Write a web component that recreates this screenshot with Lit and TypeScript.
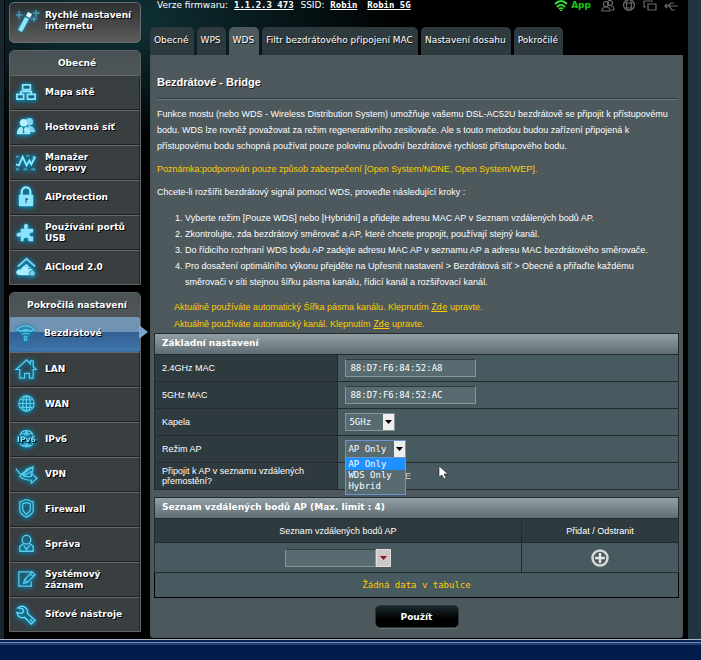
import { LitElement, html, css, svg } from "lit";
import { customElement, property, state } from "lit/decorators.js";
import { classMap } from "lit/directives/class-map.js";

const icons: Record<string, unknown> = {
  wand: svg`<g fill="none" stroke-width="1"><path d="M3 2v8M0 6h7M20 1v7M17 4h7M18 8v5M15 10h6" stroke="#4fb4d6"/></g><path d="M12 3l4 2-2 4-4-2z" fill="#e8fbff"/><path d="M9 8l4 2-7 13-4-2z" fill="#8fe4fa"/>`,
  map: svg`<path d="M8 4h8v5H8zM2 14h7v5H2zM13 14h8v5h-8zM12 9v3M6 13v-2h11v2" fill="#1e6780" stroke="#8fe6fb" stroke-width="1.800"/>`,
  guests: svg`<circle cx="15" cy="6" r="4" fill="#7fd6ee"/><path d="M13 11c5-2 8 2 8 6h-6z" fill="#7fd6ee"/><circle cx="9" cy="7" r="4" fill="#b5f1ff"/><path d="M2 19c0-5 2-7 5-8l2 3 2-3c3 1 5 3 5 8z" fill="#a3ebfd"/><path d="M9 12l-1 6h2z" fill="#2a7690"/>`,
  traffic: svg`<path d="M1 6h3M12 5h3M18 6h3M1 19h3M9 19h4M17 19h4" stroke="#3ca0c0" stroke-width="2"/><path d="M1 14l3 1 4-9 4 9 3-5 2 4 4-8" fill="none" stroke="#8be7fd" stroke-width="2"/>`,
  lock: svg`<path d="M7 10V6c0-6 9-6 9 0v4" fill="none" stroke="#8ee5fb" stroke-width="2.4"/><rect x="4" y="9" width="15" height="12" rx="1" fill="#8ce5fb"/><path d="M11 12l3 2-2 1v3h-1z" fill="#175a75"/>`,
  puzzle: svg`<path d="M6 8h4C7 1 16 1 13 8h6v4c-5-1-5 5 0 4v5h-5c1-5-6-5-5 0H6v-5c-6 2-6-5 0-4z" fill="#8ae3fa"/>`,
  cloud: svg`<path d="M3 11l9-8 9 8" fill="none" stroke="#75d3ee" stroke-width="2"/><path d="M7 12l5-4 5 5" fill="#80dcf4"/><path d="M5 20c-6 0-4-7 1-6 2-5 8-3 8 0 4-2 7 1 5 6z" fill="#a5effe"/><circle cx="18" cy="18" r="3" fill="#75d4ed" stroke="#267590" stroke-width=".8"/>`,
  wifi: svg`<g fill="none" stroke="#62cdf2" stroke-width="1.1"><path d="M2 8c5-5 13-5 18 0-2 2-16 2-18 0zM5 10.500c4-3 8-3 12 0M7 13c3-2 5-2 8 0M9 15.500c1-1 3-1 4 0"/><circle cx="11" cy="18" r="1.500"/></g>`,
  house: svg`<path d="M1 12L12 2l4 4V3h3v6l3 3h-3v9h-4v-5h-5v5H5v-9z" fill="none" stroke="#58cdf0" stroke-width="1.3"/>`,
  globe: svg`<g fill="none" stroke="#61cdeb" stroke-width="1.2"><circle cx="12" cy="11" r="8"/><ellipse cx="12" cy="11" rx="4" ry="8"/><path d="M12 3v16M4 11h16M6 7h12M6 15h12"/></g>`,
  ipv6: svg`<g fill="none" stroke="#61cdeb" stroke-width="1.1"><path d="M5 8c2-7 12-7 14 0M5 16c3 5 11 5 14 0M10 8c1-5 3-5 4 0M10 16c1 4 3 4 4 0M12 3v5M12 16v4M6 6h12M6 18h12"/></g><text x="12" y="15" text-anchor="middle" font-family="DejaVu Sans" font-size="8" fill="#8be8fc">IPv6</text>`,
  vpn: svg`<path d="M1 6l4 5c4 2 5 0 9-4l-3 0 8-3-1 6-2-1c-3 3-5 4-8 4 4 2 6 1 9 1v-3l6 5-6 5v-3c-5 0-9-1-12-4 2-3 7-7 13-9" fill="none" stroke="#5bcdec" stroke-width="1.3"/>`,
  shield: svg`<g fill="none" stroke="#5bcdec" stroke-width="1.3"><path d="M5 4c2 0 4-1 5-2h4c1 1 3 2 5 2v9c0 3-3 5-7 7-4-2-7-4-7-7z"/><path d="M8 6l3-1h2l3 1v6c0 2-2 3-4 5-2-2-4-3-4-5z"/></g>`,
  admin: svg`<g fill="none" stroke="#5bcdec" stroke-width="1.4"><circle cx="12" cy="7" r="4.5"/><path d="M9 11l-4 3v5h14v-5l-4-3M9 13l3 4 3-4"/></g>`,
  log: svg`<g fill="none" stroke="#5bcdec" stroke-width="1.3"><path d="M17 5V4H4v15h13v-5"/><path d="M10 12l8-8 3 3-8 8-4 1zM10 12l3 3M16 6l3 3"/></g>`,
  wrench: svg`<path d="M3 5l5 1 1 3-2 2-5-1c1 4 4 6 8 5l7 7 4-4-8-7c1-6-5-10-10-6zM16 17l2 2" fill="none" stroke="#65d7f4" stroke-width="1.5"/>`,
};

interface MenuItem { icon: string; label: string; active?: boolean; }

const general: MenuItem[] = [
  { icon: "map", label: "Mapa sítě" },
  { icon: "guests", label: "Hostovaná síť" },
  { icon: "traffic", label: "Manažer dopravy" },
  { icon: "lock", label: "AiProtection" },
  { icon: "puzzle", label: "Používání portů USB" },
  { icon: "cloud", label: "AiCloud 2.0" },
];
const advanced: MenuItem[] = [
  { icon: "wifi", label: "Bezdrátové", active: true },
  { icon: "house", label: "LAN" },
  { icon: "globe", label: "WAN" },
  { icon: "ipv6", label: "IPv6" },
  { icon: "vpn", label: "VPN" },
  { icon: "shield", label: "Firewall" },
  { icon: "admin", label: "Správa" },
  { icon: "log", label: "Systémový záznam" },
  { icon: "wrench", label: "Síťové nástroje" },
];
const tabs = ["Obecné", "WPS", "WDS", "Filtr bezdrátového připojení MAC", "Nastavení dosahu", "Pokročilé"];

@customElement("side-menu")
export class SideMenu extends LitElement {
  @property() heading = "";
  @property({ attribute: false }) items: MenuItem[] = [];

  static styles = css`
    :host { display: block; }
    * { box-sizing: border-box; }
    nav { border: 1px solid #5d6465; border-radius: 5px 5px 0 0; }
    h2 {
      margin: 0; height: 24px; padding-left: 4px; text-align: center;
      font: bold 9px/24px "DejaVu Sans", Verdana, sans-serif; color: #fff;
      background: linear-gradient(#495154, #4e5658); border-radius: 4px 4px 0 0;
      text-shadow: 1px 1px 0 #1a1d1e;
    }
    a {
      position: relative; display: flex; align-items: center; gap: 7px; height: 35px; padding: 0 8px 0 5px;
      font: bold 9px/11px "DejaVu Sans", Verdana, sans-serif; color: #fff; text-decoration: none;
      text-shadow: 1px 1px 0 #000; background: #393e40;
      border-top: 1px solid #63696a; border-bottom: 1px solid #1e2223; border-right: 1px solid #222627;
    }
    a:last-child { height: 34px; border-bottom: 0; }
    a.active { padding-bottom: 3px; gap: 6px; background: linear-gradient(#7294b4 0 43%, #335f91 43%, #3f74ac); border-color: #6f91b2 transparent #3a6ba0; }
    a.active::after {
      content: ""; position: absolute; left: 100%; top: 7px;
      border: 7px solid transparent; border-left: 9px solid #7ba3cb; border-right: 0;
    }
    svg { width: 23px; height: 23px; flex: none; overflow: visible; filter: drop-shadow(0 0 2px #0889b5) drop-shadow(0 1px 2px #08789f); }
  `;

  render() {
    return html`<nav aria-label=${this.heading}>
      <h2>${this.heading}</h2>
      ${this.items.map((i) => html`<a href="#" class=${classMap({ active: !!i.active })}>
        <svg viewBox="0 0 24 24" aria-hidden="true">${icons[i.icon]}</svg><span>${i.label}</span></a>`)}
    </nav>`;
  }
}

@customElement("app-root")
export class AppRoot extends LitElement {
  @state() private mode = "AP Only";

  static styles = css`
    :host { display: block; font: 9px/16px "Liberation Sans", Arial, sans-serif; color: #fff; }
    * { box-sizing: border-box; }
    .page { min-height: 100vh; display: flex; flex-direction: column; }
    .window { background: linear-gradient(90deg, #17252e, #213440); padding: 0 13px 0 4px; }
    .content {
      display: flex; gap: 9px; padding: 0 5px 1px;
      background: radial-gradient(ellipse 290px 120px at 110px 20px, #10343a, transparent), #000;
      border-left: 1px solid #000;
    }
    aside { width: 132px; flex: none; display: flex; flex-direction: column; gap: 7px; padding: 2px 0 6px; margin-left: -1px; }
    .quick {
      display: flex; align-items: center; gap: 5px; height: 41px; padding: 0 4px 3px 6px; text-align: left;
      font: bold 9px/11px "DejaVu Sans", Verdana, sans-serif; color: #fff; text-shadow: 1px 1px 0 #000;
      background: linear-gradient(#2d3031, #5c5c5c); border: 1px solid #6a6e6f; border-radius: 5px;
    }
    .quick svg { width: 24px; height: 24px; flex: none; overflow: visible; filter: drop-shadow(0 0 2px #0aa2d8); }
    main { flex: 1; min-width: 0; display: flex; flex-direction: column; }
    header { display: flex; justify-content: space-between; height: 27px; padding: 0 5px 0 7px; font: 9px/11px "DejaVu Sans", Tahoma, sans-serif; }
    header a { font: bold 9px/11px "DejaVu Sans Mono", monospace; color: #fff; margin: 0 4px 0 3px; }
    .status { display: flex; gap: 7px; }
    .status svg { width: 14px; height: 14px; fill: none; stroke: #6a6a6a; stroke-width: 1.2; }
    .app { display: flex; gap: 3px; margin-right: 3px; color: #14c814; font-weight: bold; }
    .app svg { stroke: #35dd35; stroke-width: 2; }
    .tabs { display: flex; gap: 3px; }
    .tabs a {
      height: 28px; padding: 0 5px 0 4px; border-radius: 5px 5px 0 0; background: #2f3a3e; color: #fff;
      font: 9px/27px "DejaVu Sans", Tahoma, sans-serif; text-decoration: none; text-shadow: 1px 1px 0 #111; white-space: nowrap;
    }
    .tabs a.active { background: #4d595d; }
    .panel { flex: 1; background: #4d595d; border: 1px solid #465156; border-top: 0; border-radius: 0 0 3px 3px; padding: 19px 3px 9px; }
    .intro { padding: 0 3px; }
    h1 { margin: 0; padding-bottom: 8px; font: bold 11px/16px "Liberation Sans", Arial, sans-serif; text-shadow: 1px 1px 0 #222; border-bottom: 1px solid #2c383e; box-shadow: 0 1px 0 #6b7a80; }
    p { margin: 7px 0 0; }
    ol { margin: 10px 0 0; padding-left: 28px; }
    .note, .warn { color: #fc0; }
    .warn { margin: 9px 0 0; padding-left: 17px; line-height: 17px; }
    .warn a { color: #fc0; font: 9px/16px "DejaVu Sans Mono", monospace; }
    table { width: 100%; border-collapse: collapse; }
    caption {
      height: 21px; padding-left: 7px; text-align: left; font: bold 9px/19px "DejaVu Sans", Verdana, sans-serif;
      background: linear-gradient(#92a0a5, #5f6d73); border: 1px solid #222b2e; border-bottom: 0;
    }
    th { font-weight: normal; background: #2f3a3e; line-height: 10px; padding: 0; }
    td { background: #475a5f; padding: 0 7px; }
    th, td { border: 1px solid #222b2e; }
    .settings th { width: 35%; text-align: left; padding: 0 7px; }
    .settings tr { height: 27px; }
    .remote { margin-top: 7px; text-align: center; }
    .remote th { height: 24px; width: 70%; }
    .remote th + th { width: 30%; }
    .remote td { height: 30px; }
    .remote .empty { height: 25px; border: 1px solid #000; color: #fc0; font: 9px/11px "DejaVu Sans Mono", monospace; }
    input[type="text"] {
      display: block; width: 131px; height: 18px; padding: 0 4px; color: #fff; background: #576b71; border: 1px solid #88979c;
      border-top-color: #303c40; font: 9px/16px "DejaVu Sans Mono", monospace; border-radius: 0;
    }
    .select { position: relative; display: inline-grid; vertical-align: middle; }
    .select > select, .select > svg { grid-area: 1 / 1; }
    select {
      appearance: none; width: 50px; height: 18px; padding: 0 3px; color: #fff; border: 1px solid #86969b; border-radius: 0;
      background: #576b71; font: 9px/16px "DejaVu Sans Mono", monospace;
    }
    .select > svg { justify-self: end; align-self: center; margin-right: 1px; width: 11px; height: 16px; background: #eee; pointer-events: none; }
    .open select { width: 61px; padding: 0 2px; border-color: #6b94cf; }
    .menu {
      position: absolute; z-index: 2; top: 100%; left: 0; width: 61px; margin: -1px 0 0; padding: 0 0 2px; list-style: none;
      background: #576b71; border: 1px solid #6b94cf; font: 9px/11px "DejaVu Sans Mono", monospace;
    }
    .menu li { padding: 0 2px; }
    .menu li.on { background: #1e90ff; line-height: 12px; }
    .cell { position: relative; }
    .pointer { position: absolute; z-index: 3; left: 100px; top: 30px; width: 10px; height: 14px; }
    .radio { display: flex; align-items: center; padding-left: 39px; color: #c8d0d2; }
    .radio input { width: 10px; height: 10px; margin: 0 4px 0 0; }
    .combo { display: inline-flex; vertical-align: middle; height: 18px; }
    .combo input[type="text"] { width: 91px; }
    .combo button { width: 15px; padding: 0; border: 1px solid #ddd; background: #c9c9c9; display: grid; place-items: center; }
    .add { display: grid; margin: 0 auto; padding: 0; background: none; border: 0; }
    .add svg { width: 20px; height: 20px; }
    .apply {
      display: block; margin: 7px auto 0; width: 84px; height: 23px; padding: 0; color: #fff; border: 1px solid #2b3437; border-radius: 5px;
      background: linear-gradient(#1b2a2e, #000 60%); box-shadow: 0 1px 1px #66757a; font: bold 9px/20px "DejaVu Sans", Verdana, sans-serif;
    }
    footer { flex: 1; min-height: 21px; background: linear-gradient(#a9b7cb 0 1px, #0b2355 1px 3px, #6d86a9 3px 4px, #24406f 4px 6px, #001b4b 6px); }
  `;

  private arrow(color = "#000") {
    return svg`<path d="M2 6h7l-3.500 4z" fill=${color} />`;
  }

  render() {
    return html`<div class="page">
      <div class="window"><div class="content">
        <aside>
          <button class="quick"><svg viewBox="0 0 24 24" aria-hidden="true">${icons.wand}</svg><span>Rychlé nastavení internetu</span></button>
          <side-menu heading="Obecné" .items=${general}></side-menu>
          <side-menu heading="Pokročilá nastavení" .items=${advanced}></side-menu>
        </aside>
        <main>
          <header>
            <div>Verze firmwaru: <a href="#">1.1.2.3_473</a> SSID: <a href="#">Robin</a> <a href="#">Robin_5G</a></div>
            <div class="status">
              <span class="app"><svg viewBox="0 0 14 14"><path d="M1 4c4-4 8-4 12 0M3 7c3-3 5-3 8 0M5 9c1-1 3-1 4 0M7 10v1"/></svg>App</span>
              <svg viewBox="0 0 14 14"><circle cx="9" cy="3" r="2.500"/><circle cx="5" cy="4" r="2.500"/><path d="M1 11c0-3 2-4 4-4s4 1 4 4zM10 6c2 0 3 2 3 4h-3"/></svg>
              <svg viewBox="0 0 14 14"><circle cx="7" cy="5" r="5.500"/><ellipse cx="7" cy="5" rx="2.500" ry="5.500"/><path d="M2 3h10M2 8h10"/></svg>
              <svg viewBox="0 0 14 14"><path d="M5 4h8v6H5zM3 7H1V1h8v1"/></svg>
              <svg viewBox="0 0 14 14"><path d="M1 6h13M4 6l3-3h3M5 6l3 4h3M3 4L1 6l2 2"/></svg>
            </div>
          </header>
          <nav class="tabs">${tabs.map((t) => html`<a href="#" class=${classMap({ active: t === "WDS" })}>${t}</a>`)}</nav>
          <section class="panel">
            <div class="intro">
              <h1>Bezdrátové - Bridge</h1>
              <p>Funkce mostu (nebo WDS - Wireless Distribution System) umožňuje vašemu DSL-AC52U bezdrátově se připojit k přístupovému bodu. WDS lze rovněž považovat za režim regenerativního zesilovače. Ale s touto metodou budou zařízení připojená k přístupovému bodu schopná používat pouze polovinu původní bezdrátové rychlosti přístupového bodu.</p>
              <p class="note">Poznámka:podporován pouze způsob zabezpečení [Open System/NONE, Open System/WEP].</p>
              <p>Chcete-li rozšířit bezdrátový signál pomocí WDS, proveďte následující kroky :</p>
              <ol>
                <li>Vyberte režim [Pouze WDS] nebo [Hybridní] a přidejte adresu MAC AP v Seznam vzdálených bodů AP.</li>
                <li>Zkontrolujte, zda bezdrátový směrovač a AP, které chcete propojit, používají stejný kanál.</li>
                <li>Do řídicího rozhraní WDS bodu AP zadejte adresu MAC AP v seznamu AP a adresu MAC bezdrátového směrovače.</li>
                <li>Pro dosažení optimálního výkonu přejděte na Upřesnit nastavení &gt; Bezdrátová síť &gt; Obecné a přiřaďte každému směrovači v síti stejnou šířku pásma kanálu, řídicí kanál a rozšiřovací kanál.</li>
              </ol>
              <div class="warn">
                Aktuálně používáte automatický Šířka pásma kanálu. Klepnutím <a href="#">Zde</a> upravte.<br />
                Aktuálně používáte automatický kanál. Klepnutím <a href="#">Zde</a> upravte.
              </div>
            </div>
            <table class="settings">
              <caption>Základní nastavení</caption>
              <tr><th scope="row"><label for="mac24">2.4GHz MAC</label></th><td><input id="mac24" type="text" readonly value="88:D7:F6:84:52:A8" /></td></tr>
              <tr><th scope="row"><label for="mac5">5GHz MAC</label></th><td><input id="mac5" type="text" readonly value="88:D7:F6:84:52:AC" /></td></tr>
              <tr><th scope="row"><label for="band">Kapela</label></th><td><span class="select"><select id="band"><option>5GHz</option></select><svg viewBox="0 0 11 16">${this.arrow()}</svg></span></td></tr>
              <tr><th scope="row"><label for="mode">Režim AP</label></th><td class="cell">
                <span class="select open"><select id="mode"><option>${this.mode}</option></select><svg viewBox="0 0 11 16">${this.arrow()}</svg>
                  <ul class="menu">${["AP Only", "WDS Only", "Hybrid"].map((o) => html`<li class=${classMap({ on: o === this.mode })} @click=${() => (this.mode = o)}>${o}</li>`)}</ul></span>
                <svg class="pointer" viewBox="0 0 10 14"><path d="M1 0v11l3-2 2 4 2-1-2-4h4z" fill="#fff" stroke="#222" stroke-width=".6"/></svg>
              </td></tr>
              <tr><th scope="row">Připojit k AP v seznamu vzdálených přemostění?</th><td><label class="radio"><input type="radio" name="link" checked />NE</label></td></tr>
            </table>
            <table class="remote">
              <caption>Seznam vzdálených bodů AP (Max. limit : 4)</caption>
              <tr><th scope="col">Seznam vzdálených bodů AP</th><th scope="col">Přidat / Odstranit</th></tr>
              <tr><td><span class="combo"><input type="text" aria-label="Seznam vzdálených bodů AP" /><button aria-label="Vybrat"><svg width="11" height="16" viewBox="0 0 11 16">${this.arrow("#a00812")}</svg></button></span></td>
                <td><button class="add" aria-label="Přidat"><svg viewBox="0 0 20 20"><circle cx="10" cy="10" r="7.500" fill="#4a5659" stroke="#d5d9da" stroke-width="2.500"/><path d="M10 5v10M5 10h10" stroke="#e3e7e8" stroke-width="2.500"/></svg></button></td></tr>
              <tr><td class="empty" colspan="2">Žádná data v tabulce</td></tr>
            </table>
            <button class="apply">Použít</button>
          </section>
        </main>
      </div></div>
      <footer></footer>
    </div>`;
  }
}
